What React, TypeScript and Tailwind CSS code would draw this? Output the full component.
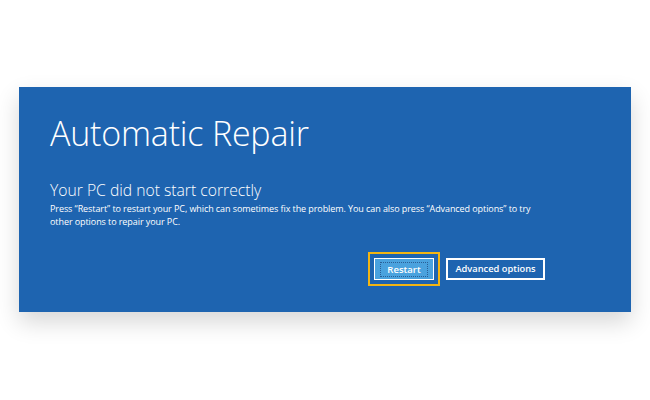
export default function App() {
  return (
    <div className="w-[650px] h-[400px] bg-white pt-[87px] px-[19px]">
      <div
        className="h-[225px] bg-[#1e64b0] text-white pl-[31px] pr-[86px] pt-[24px] shadow-[0_10px_22px_rgba(0,0,0,0.16)]"
        style={{ fontFamily: '"Open Sans", "Noto Sans", sans-serif' }}
      >
        <h1 className="text-[34px] font-light leading-[44px] tracking-[-0.2px]">Automatic Repair</h1>
        <h2 className="mt-[24px] text-[15.7px] font-light leading-[22px]">Your PC did not start correctly</h2>
        <p className="mt-[1px] w-[500px] text-[9px] tracking-[-0.08px] leading-[13px]">
          Press “Restart” to restart your PC, which can sometimes fix the problem. You can also press “Advanced options” to try other options to repair your PC.
        </p>
        <div className="mt-[24px] flex justify-end items-center gap-[6px]">
          <div className="border-2 border-[#f3b512] p-[4px]">
            <button className="w-[60px] h-[22px] bg-[#4aa2de] border border-white flex items-center justify-center">
              <span className="px-[6px] border border-dotted border-[#2a5f95] text-[9.5px] font-semibold leading-[13px]">Restart</span>
            </button>
          </div>
          <button className="w-[99px] h-[22px] border-2 border-white text-[9.3px] font-semibold flex items-center justify-center">
            Advanced options
          </button>
        </div>
      </div>
    </div>
  );
}
